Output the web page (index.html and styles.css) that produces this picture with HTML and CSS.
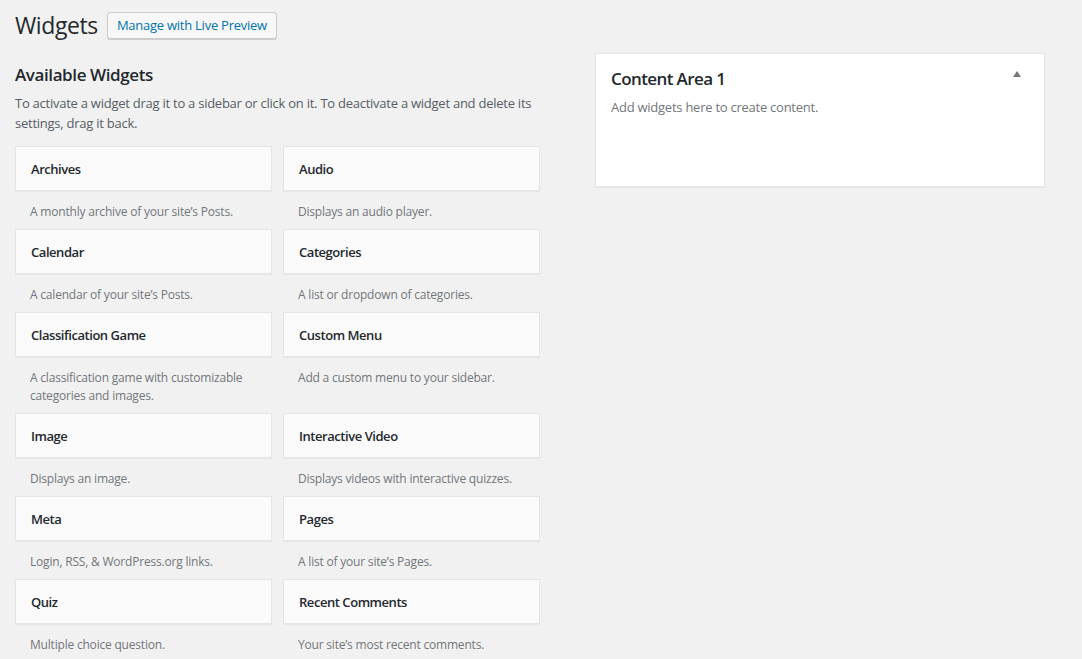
FILE: index.html
```html
<!DOCTYPE html>
<html lang="en">
<head>
<meta charset="utf-8">
<title>Widgets</title>
<link rel="stylesheet" href="styles.css">
</head>
<body>
<div class="wrap">
  <header class="page-head">
    <h1>Widgets</h1>
    <a class="button" href="#">Manage with Live Preview</a>
  </header>
  <div class="columns">
    <section class="available">
      <h2>Available Widgets</h2>
      <p class="intro">To activate a widget drag it to a sidebar or click on it. To deactivate a widget and delete its settings, drag it back.</p>
      <div class="widget-grid">
        <div class="widget"><div class="widget-title">Archives</div><p class="widget-desc">A monthly archive of your site’s Posts.</p></div>
        <div class="widget"><div class="widget-title">Audio</div><p class="widget-desc">Displays an audio player.</p></div>
        <div class="widget"><div class="widget-title">Calendar</div><p class="widget-desc">A calendar of your site’s Posts.</p></div>
        <div class="widget"><div class="widget-title">Categories</div><p class="widget-desc">A list or dropdown of categories.</p></div>
        <div class="widget"><div class="widget-title">Classification Game</div><p class="widget-desc">A classification game with customizable categories and images.</p></div>
        <div class="widget"><div class="widget-title">Custom Menu</div><p class="widget-desc">Add a custom menu to your sidebar.</p></div>
        <div class="widget"><div class="widget-title">Image</div><p class="widget-desc">Displays an image.</p></div>
        <div class="widget"><div class="widget-title">Interactive Video</div><p class="widget-desc">Displays videos with interactive quizzes.</p></div>
        <div class="widget"><div class="widget-title">Meta</div><p class="widget-desc">Login, RSS, &amp; WordPress.org links.</p></div>
        <div class="widget"><div class="widget-title">Pages</div><p class="widget-desc">A list of your site’s Pages.</p></div>
        <div class="widget"><div class="widget-title">Quiz</div><p class="widget-desc">Multiple choice question.</p></div>
        <div class="widget"><div class="widget-title">Recent Comments</div><p class="widget-desc">Your site’s most recent comments.</p></div>
      </div>
    </section>
    <aside class="sidebars">
      <div class="sidebar-panel">
        <div class="sidebar-head">
          <h2>Content Area 1</h2>
          <span class="toggle" aria-hidden="true"></span>
        </div>
        <p class="sidebar-desc">Add widgets here to create content.</p>
      </div>
    </aside>
  </div>
</div>
</body>
</html>
```

FILE: styles.css
```css
html, body {
  margin: 0;
  padding: 0;
  background: #f1f1f1;
}
body {
  font-family: "Open Sans", "Noto Sans", sans-serif;
  font-size: 13px;
  letter-spacing: -0.25px;
  color: #23282d;
  overflow: hidden;
}
.wrap {
  padding: 12px 0 0 15px;
}
.page-head {
  display: flex;
  align-items: center;
  gap: 9px;
  height: 27px;
}
.page-head h1 {
  margin: 0;
  font-size: 23px;
  font-weight: 400;
  line-height: 27px;
  letter-spacing: -0.4px;
  color: #23282d;
}
.button {
  display: inline-block;
  box-sizing: border-box;
  height: 27px;
  line-height: 25px;
  padding: 0 9px;
  border: 1px solid #cccccc;
  border-radius: 3px;
  background: #f7f7f7;
  color: #0073aa;
  text-decoration: none;
  font-size: 13px;
  box-shadow: 0 1px 0 #cccccc;
}
.columns {
  display: flex;
  align-items: flex-start;
  gap: 55px;
}
.available {
  width: 525px;
  padding-top: 25px;
}
.available h2 {
  margin: 0;
  font-size: 17px;
  font-weight: 600;
  line-height: 22px;
  letter-spacing: -0.4px;
  color: #23282d;
}
.intro {
  margin: 7px 0 13px;
  line-height: 20px;
  color: #555d66;
}
.widget-grid {
  display: grid;
  grid-template-columns: 257px 257px;
  column-gap: 11px;
}
.widget-title {
  box-sizing: border-box;
  height: 45px;
  padding: 1px 15px 0;
  line-height: 42px;
  background: #fafafa;
  border: 1px solid #e5e5e5;
  box-shadow: 0 1px 1px rgba(0, 0, 0, 0.04);
  font-weight: 600;
  letter-spacing: -0.45px;
  color: #23282d;
}
.widget-desc {
  margin: 0;
  padding: 12px 14px 8px 15px;
  font-size: 12px;
  line-height: 18px;
  letter-spacing: -0.2px;
  color: #72777c;
}
.sidebars {
  padding-top: 14px;
}
.sidebar-panel {
  box-sizing: border-box;
  width: 450px;
  min-height: 134px;
  padding: 0 15px;
  background: #ffffff;
  border: 1px solid #e5e5e5;
  box-shadow: 0 1px 1px rgba(0, 0, 0, 0.04);
}
.sidebar-head {
  display: flex;
  align-items: flex-start;
  justify-content: space-between;
  padding-top: 14px;
}
.sidebar-head h2 {
  margin: 0;
  font-size: 17px;
  font-weight: 600;
  line-height: 22px;
  letter-spacing: -0.6px;
  color: #23282d;
}
.toggle {
  width: 0;
  height: 0;
  margin: 3px 8px 0 0;
  border-left: 4px solid transparent;
  border-right: 4px solid transparent;
  border-bottom: 6px solid #72777c;
}
.sidebar-desc {
  margin: 8px 0 0;
  line-height: 18px;
  color: #72777c;
}
```
